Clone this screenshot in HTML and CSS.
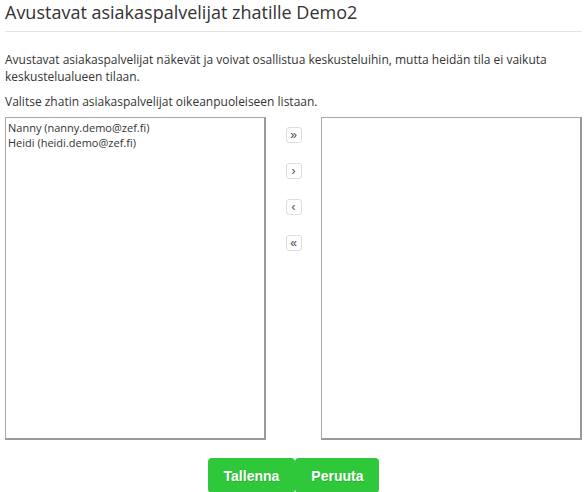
FILE: index.html
```html
<!DOCTYPE html>
<html lang="fi">
<head>
    <meta charset="UTF-8">
    <title>Avustavat asiakaspalvelijat</title>
    <link rel="stylesheet" href="styles.css">
</head>
<body>
    <div class="dialog">
        <h1>Avustavat asiakaspalvelijat zhatille Demo2</h1>
        <p class="intro">Avustavat asiakaspalvelijat näkevät ja voivat osallistua keskusteluihin, mutta heidän tila ei vaikuta keskustelualueen tilaan.</p>
        <p class="hint">Valitse zhatin asiakaspalvelijat oikeanpuoleiseen listaan.</p>
        <div class="picker">
            <div class="list">
                <div class="item">Nanny (nanny.demo@zef.fi)</div>
                <div class="item">Heidi (heidi.demo@zef.fi)</div>
            </div>
            <div class="moves">
                <button class="move">&raquo;</button>
                <button class="move">&rsaquo;</button>
                <button class="move">&lsaquo;</button>
                <button class="move">&laquo;</button>
            </div>
            <div class="list"></div>
        </div>
        <div class="actions">
            <button class="action">Tallenna</button>
            <button class="action">Peruuta</button>
        </div>
    </div>
</body>
</html>
```

FILE: styles.css
```css
body {
    margin: 0;
    font-family: "Open Sans", Arial, sans-serif;
    color: #333;
    background: white;
}
.dialog {
    padding: 0 6px 0 5px;
}
h1 {
    font-size: 18px;
    font-weight: normal;
    margin: 0;
    padding: 1px 0 8px;
    line-height: 22px;
    border-bottom: 1px solid #e5e5e5;
}
p {
    font-size: 12px;
    line-height: 17px;
    margin: 0;
}
.intro {
    margin: 19px 0 8px;
}
.hint {
    margin-bottom: 7px;
}
.picker {
    display: flex;
    justify-content: space-between;
}
.list {
    width: 256px;
    height: 318px;
    border-style: solid;
    border-width: 1px 2px 2px 1px;
    border-color: #aaa #999 #999 #aaa;
    font-size: 11px;
    line-height: 15px;
    padding: 2px 0 0 2px;
}
.moves {
    display: flex;
    flex-direction: column;
    gap: 20px;
    padding-top: 10px;
}
.move {
    width: 16px;
    height: 16px;
    padding: 0;
    background: white;
    border: 1px solid #ddd;
    border-radius: 3px;
    color: #444;
    font-size: 12px;
    line-height: 12px;
}
.actions {
    display: flex;
    justify-content: center;
    margin-top: 18px;
}
.action {
    background: #2ec83a;
    color: white;
    border: none;
    border-radius: 4px;
    font-family: "Liberation Sans", Arial, sans-serif;
    font-weight: bold;
    font-size: 14px;
    height: 35px;
    padding: 0 16px;
    text-shadow: 1px 1px 0 rgba(0, 0, 0, 0.15);
}
```
